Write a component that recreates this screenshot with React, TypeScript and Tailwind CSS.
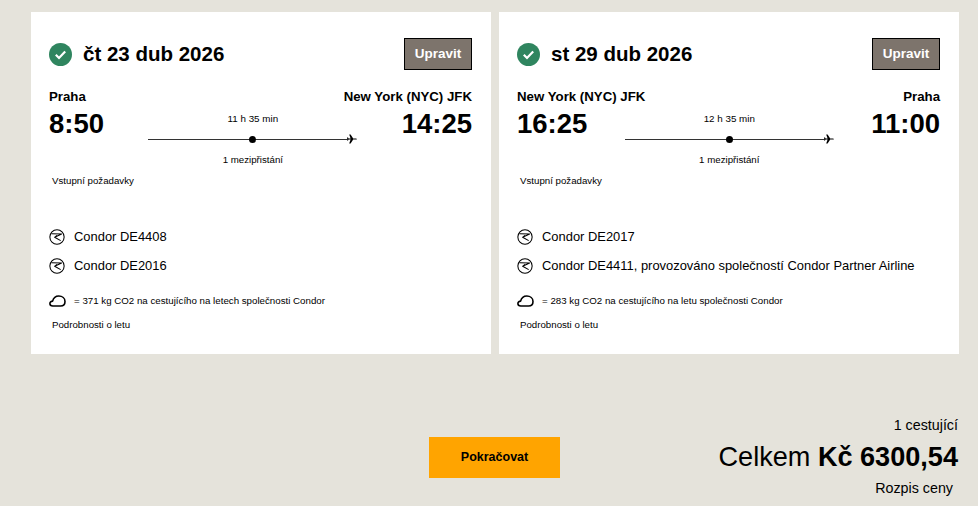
import React from 'react';

const font = "font-['Liberation_Sans',Arial,sans-serif]";

// Airline roundel
const CondorIcon = () => (
  <svg width="16" height="16" viewBox="0 0 17 17" fill="none" stroke="#000" className="shrink-0">
    <circle cx="8.5" cy="8.5" r="7.6" strokeWidth="1.1" />
    <path d="M2.4 5 L13.4 5.4 L6 8.8 L12.4 12.4 M6 8.8 L8.4 6.8" strokeWidth="1.1" strokeLinejoin="round" />
  </svg>
);

const CloudIcon = () => (
  <svg width="17" height="12" viewBox="0 0 17 12" fill="none" stroke="#000" strokeWidth="1.6" className="shrink-0">
    <path d="M3.8 11 C1.9 11 0.9 9.9 0.9 8.6 C0.9 7.2 2 6.1 3.6 6.1 C4.4 3 6.8 1 9.8 1 C13.2 1 16 3.2 16 6.4 C16 9.2 14.2 11 11.6 11 Z" strokeLinejoin="round" />
  </svg>
);

const CheckBadge = () => (
  <svg width="23" height="23" viewBox="0 0 23 23" className="shrink-0">
    <circle cx="11.5" cy="11.5" r="11.5" fill="#2f855f" />
    <path d="M6.8 11.8 L10 15 L16.2 8.6" fill="none" stroke="#fff" strokeWidth="2.2" />
  </svg>
);

const Plane = () => (
  <svg width="10" height="10" viewBox="0 0 10 10" className="shrink-0">
    <path d="M0.3 4.4 H3.6 L2.2 0.4 H3.6 L6.2 4.4 H8.6 C9.4 4.4 9.9 4.7 9.9 5 C9.9 5.3 9.4 5.6 8.6 5.6 H6.2 L3.6 9.6 H2.2 L3.6 5.6 H0.3 Z M0 3.4 H1 L1.6 4.6 H0 Z M0 5.4 H1.6 L1 6.6 H0 Z" fill="#000" />
  </svg>
);

interface Flight {
  date: string;
  from: string;
  to: string;
  depart: string;
  arrive: string;
  duration: string;
  legs: string[];
  co2: string;
}

const flights: Flight[] = [
  {
    date: 'čt 23 dub 2026',
    from: 'Praha',
    to: 'New York (NYC) JFK',
    depart: '8:50',
    arrive: '14:25',
    duration: '11 h 35 min',
    legs: ['Condor DE4408', 'Condor DE2016'],
    co2: '= 371 kg CO2 na cestujícího na letech společnosti Condor',
  },
  {
    date: 'st 29 dub 2026',
    from: 'New York (NYC) JFK',
    to: 'Praha',
    depart: '16:25',
    arrive: '11:00',
    duration: '12 h 35 min',
    legs: ['Condor DE2017', 'Condor DE4411, provozováno společností Condor Partner Airline'],
    co2: '= 283 kg CO2 na cestujícího na letu společnosti Condor',
  },
];

const FlightCard = ({ flight }: { flight: Flight }) => (
  <div className="w-[460px] h-[342px] bg-white pt-[26px] pl-[18px] pr-[19px]">
    <div className="flex items-center justify-between h-[32px]">
      <div className="flex items-center gap-[11px]">
        <CheckBadge />
        <span className="text-[20.5px] leading-none font-bold text-black">{flight.date}</span>
      </div>
      <button className="w-[68px] h-[32px] bg-[#7d746c] border border-black text-white text-[13.5px] font-bold">
        Upravit
      </button>
    </div>

    <div className="flex justify-between mt-[19px] text-[13.25px] leading-[16px] font-bold text-black">
      <span>{flight.from}</span>
      <span>{flight.to}</span>
    </div>

    <div className="flex justify-between h-[71px]">
      <span className="text-[27.5px] leading-[32px] mt-[3px] font-bold text-black">{flight.depart}</span>
      <div className="w-[209px] flex flex-col items-center">
        <span className="text-[9.8px] leading-[12px] mt-[8px] text-black">{flight.duration}</span>
        <div className="relative w-full flex items-center mt-[9px] h-[10px]">
          <div className="flex-1 h-px bg-[#333]" />
          <Plane />
          <span className="absolute left-[101px] top-[1.5px] w-[7px] h-[7px] rounded-full bg-black" />
        </div>
        <span className="text-[9.7px] leading-[12px] mt-[10px] text-black">1 mezipřistání</span>
      </div>
      <span className="text-[27.5px] leading-[32px] mt-[3px] font-bold text-black">{flight.arrive}</span>
    </div>

    <div className="ml-[3px] mt-[-1px] text-[9.7px] leading-[12px] text-black">Vstupní požadavky</div>

    <div className="mt-[41px] flex flex-col gap-[12px]">
      {flight.legs.map((leg) => (
        <div key={leg} className="flex items-center gap-[9px] h-[17px]">
          <CondorIcon />
          <span className="text-[12.93px] leading-[17px] text-black">{leg}</span>
        </div>
      ))}
    </div>

    <div className="flex items-center gap-[8px] mt-[20px] h-[13px]">
      <CloudIcon />
      <span className="text-[9.73px] leading-[12px] text-black">{flight.co2}</span>
    </div>

    <div className="ml-[3px] mt-[12px] text-[9.7px] leading-[12px] text-black">Podrobnosti o letu</div>
  </div>
);

export default function App() {
  return (
    <div className={`${font} w-[978px] h-[506px] overflow-hidden bg-[#e5e3db]`}>
      <div className="flex gap-[8px] pt-[12px] pl-[31px]">
        {flights.map((f) => (
          <FlightCard key={f.date} flight={f} />
        ))}
      </div>

      <div className="flex items-start justify-between mt-[55px] pl-[429px] pr-[20px]">
        <button className="w-[131px] h-[41px] mt-[28px] bg-[#ffa400] text-black text-[12.5px] font-bold">
          Pokračovat
        </button>
        <div className="flex flex-col items-end pt-[8px]">
          <span className="text-[14.3px] leading-[16px] text-black">1 cestující</span>
          <span className="text-[27.1px] leading-[30px] mt-[9px] text-black">
            Celkem <span className="font-bold">Kč 6300,54</span>
          </span>
          <span className="text-[14.3px] leading-[16px] mt-[8px] mr-[5px] text-black">Rozpis ceny</span>
        </div>
      </div>
    </div>
  );
}
